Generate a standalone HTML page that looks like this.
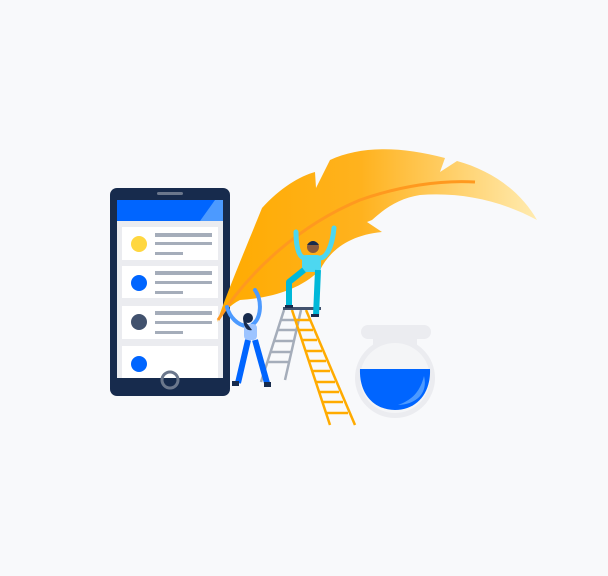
<!DOCTYPE html>
<html><head><style>
html,body{margin:0;padding:0;background:#F8F9FB;width:608px;height:576px;overflow:hidden}
svg{display:block}
</style></head><body>
<svg width="608" height="576" viewBox="0 0 608 576" xmlns="http://www.w3.org/2000/svg">
<defs>
<linearGradient id="fg" x1="0" y1="0" x2="1" y2="0">
<stop offset="0" stop-color="#FFAB00"/><stop offset="0.45" stop-color="#FFB21E"/><stop offset="1" stop-color="#FFEBB0"/>
</linearGradient>
</defs>
<rect width="608" height="576" fill="#F8F9FB"/>
<!-- phone -->
<rect x="110" y="188" width="120" height="208" rx="7" fill="#172B4D"/>
<rect x="157" y="192" width="26" height="3" rx="1.5" fill="#6B778C"/>
<rect x="117" y="200" width="106" height="178" fill="#EBECF0"/>
<rect x="117" y="200" width="106" height="21" fill="#0065FF"/>
<polygon points="200,221 215,200 223,200 223,221" fill="#4C9AFF"/>
<g fill="#fff">
<rect x="122" y="227" width="96" height="33"/>
<rect x="122" y="266" width="96" height="32"/>
<rect x="122" y="306" width="96" height="33"/>
<rect x="122" y="346" width="96" height="32"/>
</g>
<circle cx="139" cy="244" r="8" fill="#FFD740"/>
<circle cx="139" cy="283" r="8" fill="#0065FF"/>
<circle cx="139" cy="322" r="8" fill="#42526E"/>
<circle cx="139" cy="364" r="8" fill="#0065FF"/>
<g fill="#A5ADBA">
<rect x="155" y="233" width="57" height="4"/><rect x="155" y="242" width="57" height="3"/><rect x="155" y="252" width="28" height="3"/>
<rect x="155" y="271" width="57" height="4"/><rect x="155" y="281" width="57" height="3"/><rect x="155" y="291" width="28" height="3"/>
<rect x="155" y="311" width="57" height="4"/><rect x="155" y="321" width="57" height="3"/><rect x="155" y="331" width="28" height="3"/>
</g>
<circle cx="170" cy="380" r="8" fill="none" stroke="#6B778C" stroke-width="3"/>
<!-- feather -->
<path d="M217,322 C228,290 245,250 262,208 C280,188 300,176 315,172 L316,188 L330,160 C360,146 400,146 445,158 L440,172 L457,161 C490,170 520,190 537,220 C500,200 460,192 420,195 C400,198 385,208 372,220 L367,222 L382,232 C350,235 330,250 320,270 C300,290 270,298 240,300 C230,305 222,314 217,322 Z" fill="url(#fg)"/>
<path d="M218,320 C250,270 300,225 360,200 C400,186 440,180 475,182" fill="none" stroke="#FF991F" stroke-width="3"/>
<!-- grey ladder -->
<g stroke="#A5ADBA" stroke-width="2.5" fill="none">
<line x1="284" y1="310" x2="261" y2="382"/><line x1="301" y1="310" x2="285" y2="380"/>
<line x1="281" y1="320" x2="298" y2="320"/><line x1="278" y1="330" x2="296" y2="330"/><line x1="275" y1="341" x2="293" y2="341"/><line x1="271" y1="352" x2="291" y2="352"/><line x1="268" y1="362" x2="288" y2="362"/>
</g>
<!-- yellow ladder -->
<g stroke="#FFAB00" stroke-width="2.5" fill="none">
<line x1="292" y1="310" x2="330" y2="425"/><line x1="306" y1="310" x2="355" y2="425"/>
<line x1="296" y1="320" x2="310" y2="320"/><line x1="299" y1="330" x2="313" y2="330"/><line x1="302" y1="340" x2="317" y2="340"/><line x1="306" y1="351" x2="322" y2="351"/><line x1="309" y1="361" x2="326" y2="361"/><line x1="312" y1="371" x2="330" y2="371"/><line x1="316" y1="382" x2="335" y2="382"/><line x1="319" y1="392" x2="339" y2="392"/><line x1="322" y1="402" x2="343" y2="402"/><line x1="326" y1="413" x2="348" y2="413"/>
</g>
<rect x="283" y="307" width="38" height="3" fill="#42526E"/>
<!-- man -->
<g>
<path d="M296,232 C296,250 300,258 305,258 M334,228 C332,248 326,258 320,258" stroke="#4DD7F0" stroke-width="5" fill="none" stroke-linecap="round"/>
<rect x="302" y="255" width="19" height="17" rx="4" fill="#4DD7F0"/>
<path d="M304,270 L289,282 L289,306 M318,270 L316,316" stroke="#00B8D9" stroke-width="6" fill="none" stroke-linejoin="round"/>
<circle cx="313" cy="247" r="6" fill="#8B5A3C"/>
<path d="M307,245 Q313,237 319,245" fill="#172B4D"/>
<rect x="285" y="305" width="8" height="3" fill="#172B4D"/><rect x="311" y="314" width="8" height="3" fill="#172B4D"/>
</g>
<!-- woman -->
<g>
<path d="M255,290 C262,300 262,318 252,325 M227,307 C230,318 238,325 246,326" stroke="#4C9AFF" stroke-width="4" fill="none" stroke-linecap="round"/>
<rect x="244" y="324" width="13" height="16" rx="4" fill="#9DC4FF"/>
<path d="M248,340 L238,383 M255,340 L267,383" stroke="#0065FF" stroke-width="6" fill="none"/>
<circle cx="248" cy="318" r="5" fill="#172B4D"/>
<path d="M243,318 Q244,332 252,330" fill="#172B4D"/>
<rect x="232" y="381" width="7" height="5" fill="#172B4D"/><rect x="264" y="382" width="7" height="5" fill="#172B4D"/>
</g>
<!-- flask -->
<g>
<rect x="361" y="325" width="70" height="14" rx="7" fill="#EBECF0"/>
<rect x="373" y="336" width="44" height="22" fill="#EBECF0"/>
<circle cx="395" cy="378" r="40" fill="#EBECF0"/>
<circle cx="395" cy="378" r="35" fill="#F4F5F7"/>
<path d="M360,369 L430,369 C431,394 416,410 395,410 C374,410 359,394 360,369 Z" fill="#0065FF"/>
<path d="M398,405 C412,400 420,392 424,376 C428,392 418,404 398,405 Z" fill="#4C9AFF"/>
</g>
</svg>
</body></html>
